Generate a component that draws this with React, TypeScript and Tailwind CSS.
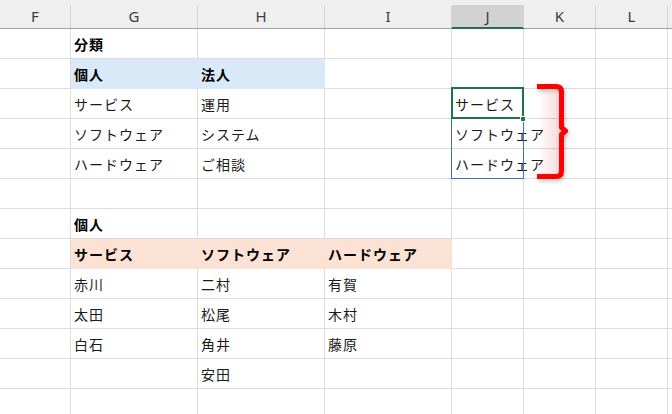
const cols = [
  { name: "F", w: "w-[71px]" },
  { name: "G", w: "w-[127px]" },
  { name: "H", w: "w-[127px]" },
  { name: "I", w: "w-[127px]" },
  { name: "J", w: "w-[72px]" },
  { name: "K", w: "w-[72px]" },
  { name: "L", w: "w-[72px]" },
  { name: "", w: "w-[72px]" },
];

type Row = {
  cells: Record<number, string>;
  bold?: boolean;
  fill?: { cols: number[]; cls: string };
};

const blue = "bg-[#dae9f8] border-[#dae9f8]";
const peach = "bg-[#fbe2d5] border-[#fbe2d5]";

const rows: Row[] = [
  { cells: { 1: "分類" }, bold: true },
  { cells: { 1: "個人", 2: "法人" }, bold: true, fill: { cols: [1, 2], cls: blue } },
  { cells: { 1: "サービス", 2: "運用", 4: "サービス" } },
  { cells: { 1: "ソフトウェア", 2: "システム", 4: "ソフトウェア" } },
  { cells: { 1: "ハードウェア", 2: "ご相談", 4: "ハードウェア" } },
  { cells: {} },
  { cells: { 1: "個人" }, bold: true },
  {
    cells: { 1: "サービス", 2: "ソフトウェア", 3: "ハードウェア" },
    bold: true,
    fill: { cols: [1, 2, 3], cls: peach },
  },
  { cells: { 1: "赤川", 2: "二村", 3: "有賀" } },
  { cells: { 1: "太田", 2: "松尾", 3: "木村" } },
  { cells: { 1: "白石", 2: "角井", 3: "藤原" } },
  { cells: { 2: "安田" } },
  { cells: {} },
];

function HeaderCell({ name, w, active }: { name: string; w: string; active?: boolean }) {
  return (
    <div className={`${w} shrink-0 flex flex-col`}>
      <div className="h-[5px]" />
      <div
        className={`h-[23px] flex items-center justify-center border-r border-[#d4d4d4] text-[15px] text-[#3c3c3c] ${
          active ? "bg-[#d2d2d2] shadow-[inset_0_-1px_0_#217346]" : ""
        }`}
      >
        {name}
      </div>
      <div className={`h-px ${active ? "bg-[#217346]" : "bg-[#a3a3a3]"}`} />
    </div>
  );
}

export default function App() {
  return (
    <div
      className="relative w-[672px] h-[414px] overflow-hidden bg-white text-black"
      style={{ fontFamily: '"Noto Sans", "Noto Sans CJK JP", sans-serif' }}
    >
      {/* column headers */}
      <div className="flex bg-[#efefef]">
        {cols.map((c, i) => (
          <HeaderCell key={i} name={c.name} w={c.w} active={c.name === "J"} />
        ))}
      </div>

      {/* grid body */}
      {rows.map((row, ri) => (
        <div key={ri} className="flex">
          {cols.map((c, ci) => {
            const filled = row.fill?.cols.includes(ci);
            const text = row.cells[ci];
            return (
              <div
                key={ci}
                className={`${c.w} shrink-0 h-[30px] flex items-center pl-[3px] border-r border-b whitespace-nowrap text-[14px] leading-none tracking-[1px] ${
                  filled ? row.fill!.cls : "border-[#dcdcdc]"
                } ${row.bold ? "font-bold text-black" : "text-[#1a1a1a]"}`}
                style={{ fontFamily: '"Noto Sans CJK JP", sans-serif' }}
              >
                {text}
              </div>
            );
          })}
        </div>
      ))}

      {/* selection J4:J6 */}
      <div className="absolute left-[451px] top-[88px] w-[73px] h-[91px] border border-[#3b6fc5] pointer-events-none" />
      <div className="absolute left-[451px] top-[87px] w-[73px] h-[32px] border-2 border-[#217346] pointer-events-none" />
      <div className="absolute left-[520px] top-[116px] w-[6px] h-[6px] bg-[#217346] border border-white" />

      {/* red brace shape */}
      <svg
        className="absolute left-[530px] top-[78px] drop-shadow-[1px_2px_2px_rgba(0,0,0,0.25)]"
        width="44"
        height="106"
        viewBox="0 0 44 106"
      >
        <defs>
          <linearGradient id="glow" x1="0" x2="1" y1="0" y2="0">
            <stop offset="0" stopColor="#ff0000" stopOpacity="0" />
            <stop offset="1" stopColor="#ff0000" stopOpacity="0.12" />
          </linearGradient>
        </defs>
        <rect x="7" y="11" width="23" height="85" fill="url(#glow)" />
        <path
          d="M7 8.5 H26 Q31.5 8.5 31.5 14 V49.5 L35.5 53 L31.5 56.5 V93 Q31.5 98.5 26 98.5 H7"
          fill="none"
          stroke="#ff0000"
          strokeWidth="5"
          strokeLinejoin="round"
        />
      </svg>
    </div>
  );
}
